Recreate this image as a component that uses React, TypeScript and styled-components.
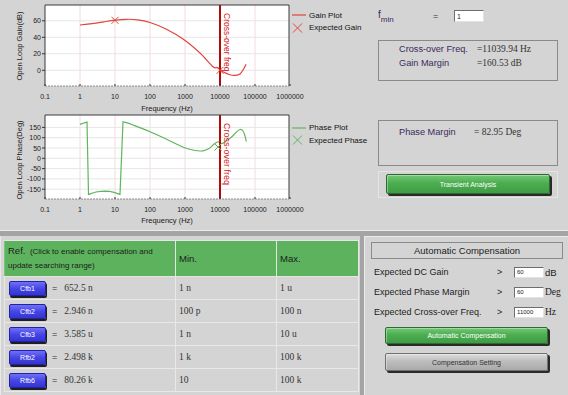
import React from 'react';
import styled, { createGlobalStyle } from 'styled-components';

const GlobalStyle = createGlobalStyle`
  html, body { margin: 0; padding: 0; background: #d4d4d4; }
  body { font-family: "Liberation Sans", Arial, sans-serif; }
`;

type Pt = [number, number];

// catmull-rom -> cubic bezier, used to draw the response curves
const smooth = (pts: Pt[], move = true) => {
  let d = move ? `M${pts[0][0]},${pts[0][1]}` : `L${pts[0][0]},${pts[0][1]}`;
  for (let i = 0; i < pts.length - 1; i++) {
    const p0 = pts[i - 1] || pts[i];
    const p1 = pts[i];
    const p2 = pts[i + 1];
    const p3 = pts[i + 2] || p2;
    const c1x = p1[0] + (p2[0] - p0[0]) / 6;
    const c1y = p1[1] + (p2[1] - p0[1]) / 6;
    const c2x = p2[0] - (p3[0] - p1[0]) / 6;
    const c2y = p2[1] - (p3[1] - p1[1]) / 6;
    d += ` C${c1x.toFixed(1)},${c1y.toFixed(1)} ${c2x.toFixed(1)},${c2y.toFixed(1)} ${p2[0]},${p2[1]}`;
  }
  return d;
};

const Page = styled.div`
  width: 568px;
  height: 395px;
  overflow: hidden;
  background: #d4d4d4;
  display: flex;
  flex-direction: column;
`;

const TopArea = styled.div`
  display: grid;
  grid-template-columns: 290px 88px 190px;
  grid-template-rows: 110px 120px;
`;

const ChartSvg = styled.svg`
  display: block;
  overflow: visible;
`;

const Legend = styled.div<{ $top: number }>`
  display: flex;
  flex-direction: column;
  padding: ${(p) => p.$top}px 0 0 2px;
`;

const LegendItem = styled.div`
  display: flex;
  align-items: center;
  height: 12.4px;
  gap: 3px;
  font-size: 8px;
  color: #111;
  white-space: nowrap;
`;

const InfoCol = styled.div<{ $top: number }>`
  display: flex;
  flex-direction: column;
  padding-top: ${(p) => p.$top}px;
`;

const FminRow = styled.div`
  display: flex;
  align-items: center;
  height: 12px;
  color: #3b2a5c;
`;

const FLabel = styled.span`
  width: 55px;
  font-size: 10px;
  sub {
    font-size: 8px;
    vertical-align: -4px;
  }
`;

const EqSign = styled.span`
  width: 21px;
  font-size: 9px;
`;

const TextBox = styled.input<{ $w: number; $h: number; $fs: number }>`
  box-sizing: border-box;
  width: ${(p) => p.$w}px;
  height: ${(p) => p.$h}px;
  border: 1px solid;
  border-color: #6e6e6e #e2e2e2 #e2e2e2 #6e6e6e;
  background: #fff;
  font-family: "Liberation Sans", Arial, sans-serif;
  font-size: ${(p) => p.$fs}px;
  padding: 0 2px;
  color: #222;
  outline: none;
`;

const ResultBox = styled.div<{ $mt: number; $h: number }>`
  box-sizing: border-box;
  margin-top: ${(p) => p.$mt}px;
  width: 180px;
  height: ${(p) => p.$h}px;
  border: 1px solid #8a8a8a;
  padding-top: 1px;
`;

const ResultRow = styled.div`
  display: flex;
  align-items: center;
  height: 13.7px;
  padding-left: 20px;
`;

const ResultLabel = styled.span<{ $w: number }>`
  width: ${(p) => p.$w}px;
  font-size: 9.2px;
  color: #3b2a5c;
`;

const ResultValue = styled.span`
  font-family: "Liberation Serif", "Times New Roman", serif;
  font-size: 9.5px;
  color: #333;
`;

const ButtonFrame = styled.div`
  box-sizing: border-box;
  margin-top: 5px;
  width: 180px;
  height: 27px;
  border: 1px solid #e4e4e4;
  padding: 2px 7px 0 7px;
`;

const ActionButton = styled.button<{ $tone: 'green' | 'gray'; $h: number }>`
  display: block;
  box-sizing: border-box;
  width: 100%;
  height: ${(p) => p.$h}px;
  padding: 0;
  border: 1px solid ${(p) => (p.$tone === 'green' ? '#2f6a32' : '#707070')};
  border-radius: 2px;
  background: ${(p) =>
    p.$tone === 'green'
      ? 'linear-gradient(#74c877, #4cae50 45%, #3f9c43)'
      : 'linear-gradient(#dcdcdc, #bdbdbd 45%, #aaaaaa)'};
  box-shadow: 2px 2px 0 #2a2a2a, inset 1px 1px 0 rgba(255, 255, 255, 0.35);
  color: ${(p) => (p.$tone === 'green' ? '#fff' : '#333')};
  font-family: "Liberation Sans", Arial, sans-serif;
  font-size: 7px;
`;

const Separator = styled.div`
  height: 5px;
  border-top: 1px solid #ececec;
  background: #a4a4a4;
`;

const BottomArea = styled.div`
  flex: 1;
  display: flex;
`;

const LeftPanel = styled.div`
  width: 360px;
  box-sizing: border-box;
  padding: 4px 0 0 3px;
  border-left: 1px solid #e8e8e8;
`;

const Divider = styled.div`
  width: 4px;
  background: #a4a4a4;
`;

const RightPanel = styled.div`
  flex: 1;
  box-sizing: border-box;
  border-left: 1px solid #ececec;
  border-top: 1px solid #ececec;
  padding: 5px 4px 0 6px;
  display: flex;
  flex-direction: column;
`;

const Table = styled.table`
  border-collapse: collapse;
  table-layout: fixed;
  width: 355px;
`;

const Th = styled.th<{ $w?: number }>`
  ${(p) => (p.$w ? `width: ${p.$w}px;` : '')}
  height: 35px;
  padding: 0 0 0 3px;
  background: #5db35d;
  border: 1px solid #e4e4e4;
  border-left-color: #7cc47c;
  text-align: left;
  vertical-align: middle;
  font-weight: normal;
  font-size: 9.5px;
  color: #1c1c1c;
`;

const RefHead = styled.div`
  line-height: 14px;
  font-size: 8px;
  b {
    font-weight: normal;
    font-size: 9.5px;
  }
`;

const Td = styled.td`
  height: 22px;
  padding: 0 0 0 3px;
  border: 1px solid #e8e8e8;
  font-family: "Liberation Serif", "Times New Roman", serif;
  font-size: 9.5px;
  color: #333;
  vertical-align: middle;
`;

const RefCell = styled.div`
  display: flex;
  align-items: center;
`;

const RefButton = styled.button`
  box-sizing: border-box;
  width: 37px;
  height: 15px;
  margin-left: 1px;
  padding: 0;
  border: 1px solid #2222a8;
  border-radius: 2px;
  background: linear-gradient(#7070f6, #4646e6 50%, #3434d2);
  box-shadow: 1px 2px 0 #1e1e1e;
  color: #fff;
  font-family: "Liberation Sans", Arial, sans-serif;
  font-size: 7px;
`;

const RefEq = styled.span`
  margin: 0 7px 0 6px;
  font-family: "Liberation Sans", Arial, sans-serif;
  font-size: 9px;
`;

const SectionTitle = styled.div`
  box-sizing: border-box;
  width: 192px;
  height: 17px;
  border: 1px solid #8a8a8a;
  display: flex;
  align-items: center;
  justify-content: center;
  font-size: 9.5px;
  color: #222;
`;

const SettingRows = styled.div`
  margin-top: 3px;
  display: flex;
  flex-direction: column;
`;

const SettingRow = styled.div`
  display: grid;
  grid-template-columns: 123px 17px 31px 1fr;
  align-items: center;
  height: 20px;
  padding-left: 3px;
  font-size: 9px;
  color: #1c1c1c;
`;

const Unit = styled.span<{ $serif?: boolean }>`
  font-family: ${(p) =>
    p.$serif ? '"Liberation Serif", "Times New Roman", serif' : '"Liberation Sans", Arial, sans-serif'};
  font-size: 9.5px;
`;

const ButtonStack = styled.div`
  margin: 5px 0 0 14px;
  width: 163px;
  display: flex;
  flex-direction: column;
  gap: 9px;
`;

/* ---------- chart ---------- */

const DECADES = ['0.1', '1', '10', '100', '1000', '10000', '100000', '1000000'];
const X0 = 45;
const X1 = 289;

interface ChartProps {
  height: number;
  y0: number;
  y1: number;
  yTicks: number[];
  yOf: (v: number) => number;
  yLabel: string;
  yLabelMid: number;
  labelBase: number;
  titleBase: number;
  gridColor: string;
  children?: React.ReactNode;
}

const Chart: React.FC<ChartProps> = ({
  height,
  y0,
  y1,
  yTicks,
  yOf,
  yLabel,
  yLabelMid,
  labelBase,
  titleBase,
  gridColor,
  children,
}) => (
  <ChartSvg width={290} height={height} fontFamily='"Liberation Sans", Arial, sans-serif'>
    <rect x={X0} y={y0} width={X1 - X0} height={y1 - y0} fill="#fff" />
    {DECADES.slice(1, 7).map((_, i) => (
      <line key={i} x1={X0 + 35 * (i + 1)} x2={X0 + 35 * (i + 1)} y1={y0} y2={y1} stroke={gridColor} strokeWidth={1} />
    ))}
    {yTicks.map((t) => (
      <line key={t} x1={X0} x2={X1} y1={yOf(t)} y2={yOf(t)} stroke="#e6e6e6" strokeWidth={1} />
    ))}
    {children}
    <line x1={X0} x2={X0} y1={y0} y2={y1} stroke="#3a3a3a" />
    <line x1={X0} x2={X1} y1={y0} y2={y0} stroke="#3a3a3a" />
    <line x1={X1} x2={X1} y1={y0} y2={y1} stroke="#3a3a3a" />
    <line x1={X0} x2={X1} y1={y1} y2={y1} stroke="#8a8a8a" strokeDasharray="2 1" />
    {yTicks.map((t) => (
      <g key={t}>
        <line x1={X0 - 3} x2={X0} y1={yOf(t)} y2={yOf(t)} stroke="#333" />
        <text x={X0 - 4} y={yOf(t) + 2.5} fontSize={7} textAnchor="end" fill="#1a1a1a">
          {t}
        </text>
      </g>
    ))}
    {DECADES.map((d, i) => (
      <g key={d}>
        <line x1={X0 + 35 * i} x2={X0 + 35 * i} y1={y1 - 2} y2={y1} stroke="#333" />
        <text x={X0 + 35 * i} y={labelBase} fontSize={7} textAnchor="middle" fill="#1a1a1a">
          {d}
        </text>
      </g>
    ))}
    <text x={167} y={titleBase} fontSize={7.5} textAnchor="middle" fill="#1a1a1a">
      Frequency (Hz)
    </text>
    <text transform={`translate(22,${yLabelMid}) rotate(-90)`} fontSize={7.5} textAnchor="middle" fill="#1a1a1a">
      {yLabel}
    </text>
  </ChartSvg>
);

const Cross: React.FC<{ x: number; y: number; color: string; r?: number }> = ({ x, y, color, r = 3.5 }) => (
  <path d={`M${x - r},${y - r} L${x + r},${y + r} M${x + r},${y - r} L${x - r},${y + r}`} stroke={color} strokeWidth={1} />
);

const CrossOver: React.FC<{ y0: number; y1: number; size: number }> = ({ y0, y1, size }) => (
  <>
    <line x1={220} x2={220} y1={y0} y2={y1} stroke="#b00a0a" strokeWidth={2} />
    <text transform={`translate(224,${y0 + 8}) rotate(90)`} fontSize={size} fill="#d42020">
      Cross-over freq
    </text>
  </>
);

const RED = '#e0443e';
const GREEN = '#5fb45f';

const gainPts: Pt[] = [
  [80, 25], [92, 23.6], [104, 21.8], [115, 20.2], [126, 19.3], [138, 19.8], [150, 22.5],
  [166, 29], [183, 39], [200, 53], [213, 66.7], [218, 67.7], [223, 71.7], [230, 74.7],
  [235, 75.3], [240, 74], [244, 68.3], [246, 64.3],
];

const phasePath =
  smooth([[80, 14.3], [84, 13], [87, 12]]) +
  ' ' +
  smooth([[88.5, 84.5], [96, 82], [106, 81.2], [114, 82.3], [120, 84.5]], false) +
  ' ' +
  smooth(
    [
      [123, 11.7], [133, 15], [150, 21.7], [166.7, 29.3], [183.3, 37.3], [195, 40.5], [203, 40.8],
      [209, 38.5], [213.5, 34.5], [217.5, 32], [220, 32.5], [222, 33.5], [226, 31], [231, 27.5],
      [236, 22.5], [240, 19.5], [243, 21], [245, 26], [246.3, 31.5],
    ],
    false,
  );

const gainY = (d: number) => 70.3 - 0.825 * d;
const phaseY = (d: number) => 48.3 - 0.206 * d;

const LegendLine: React.FC<{ color: string }> = ({ color }) => (
  <svg width={14} height={8}>
    <line x1={0} x2={14} y1={4} y2={4} stroke={color} strokeWidth={1.2} />
  </svg>
);

const LegendCross: React.FC<{ color: string }> = ({ color }) => (
  <svg width={14} height={10}>
    <Cross x={5.5} y={5} color={color} r={4.5} />
  </svg>
);

const compRows = [
  { ref: 'Cfb1', val: '652.5 n', min: '1 n', max: '1 u' },
  { ref: 'Cfb2', val: '2.946 n', min: '100 p', max: '100 n' },
  { ref: 'Cfb3', val: '3.585 u', min: '1 n', max: '10 u' },
  { ref: 'Rfb2', val: '2.498 k', min: '1 k', max: '100 k' },
  { ref: 'Rfb6', val: '80.26 k', min: '10', max: '100 k' },
];

const settings = [
  { label: 'Expected DC Gain', value: '60', unit: 'dB', serif: false },
  { label: 'Expected Phase Margin', value: '60', unit: 'Deg', serif: true },
  { label: 'Expected Cross-over Freq.', value: '11000', unit: 'Hz', serif: true },
];

const App: React.FC = () => (
  <>
    <GlobalStyle />
    <Page>
      <TopArea>
        <Chart
          height={110}
          y0={5}
          y1={86}
          yTicks={[60, 40, 20, 0]}
          yOf={gainY}
          yLabel="Open Loop Gain(dB)"
          yLabelMid={46}
          labelBase={98.5}
          titleBase={110.5}
          gridColor="#f3dada"
        >
          <path d={smooth(gainPts)} fill="none" stroke={RED} strokeWidth={1.2} />
          <Cross x={115} y={20.3} color={RED} />
          <CrossOver y0={5} y1={86} size={8.5} />
          <Cross x={220} y={70.3} color={RED} />
        </Chart>
        <Legend $top={9}>
          <LegendItem>
            <LegendLine color={RED} />
            Gain Plot
          </LegendItem>
          <LegendItem>
            <LegendCross color={RED} />
            Expected Gain
          </LegendItem>
        </Legend>
        <InfoCol $top={10}>
          <FminRow>
            <FLabel>
              f<sub>min</sub>
            </FLabel>
            <EqSign>=</EqSign>
            <TextBox $w={30} $h={12} $fs={7} defaultValue="1" />
          </FminRow>
          <ResultBox $mt={18} $h={41}>
            <ResultRow>
              <ResultLabel $w={78}>Cross-over Freq.</ResultLabel>
              <ResultValue>=11039.94 Hz</ResultValue>
            </ResultRow>
            <ResultRow>
              <ResultLabel $w={78}>Gain Margin</ResultLabel>
              <ResultValue>=160.53 dB</ResultValue>
            </ResultRow>
          </ResultBox>
        </InfoCol>

        <Chart
          height={120}
          y0={5}
          y1={89}
          yTicks={[150, 100, 50, 0, -50, -100, -150]}
          yOf={phaseY}
          yLabel="Open Loop Phase(Deg)"
          yLabelMid={50}
          labelBase={101.5}
          titleBase={112.5}
          gridColor="#eedede"
        >
          <path d={phasePath} fill="none" stroke={GREEN} strokeWidth={1.2} />
          <CrossOver y0={5} y1={89} size={9} />
          <Cross x={218} y={37} color={GREEN} />
        </Chart>
        <Legend $top={11.5}>
          <LegendItem>
            <LegendLine color={GREEN} />
            Phase Plot
          </LegendItem>
          <LegendItem>
            <LegendCross color={GREEN} />
            Expected Phase
          </LegendItem>
        </Legend>
        <InfoCol $top={0}>
          <ResultBox $mt={10} $h={46}>
            <ResultRow style={{ marginTop: 3 }}>
              <ResultLabel $w={75}>Phase Margin</ResultLabel>
              <ResultValue>= 82.95 Deg</ResultValue>
            </ResultRow>
          </ResultBox>
          <ButtonFrame>
            <ActionButton $tone="green" $h={20}>
              Transient Analysis
            </ActionButton>
          </ButtonFrame>
        </InfoCol>
      </TopArea>

      <Separator />

      <BottomArea>
        <LeftPanel>
          <Table>
            <thead>
              <tr>
                <Th $w={167}>
                  <RefHead>
                    <b>Ref.</b>&nbsp; (Click to enable compensation and
                    <br />
                    update searching range)
                  </RefHead>
                </Th>
                <Th $w={97}>Min.</Th>
                <Th>Max.</Th>
              </tr>
            </thead>
            <tbody>
              {compRows.map((r) => (
                <tr key={r.ref}>
                  <Td>
                    <RefCell>
                      <RefButton>{r.ref}</RefButton>
                      <RefEq>=</RefEq>
                      {r.val}
                    </RefCell>
                  </Td>
                  <Td>{r.min}</Td>
                  <Td>{r.max}</Td>
                </tr>
              ))}
            </tbody>
          </Table>
        </LeftPanel>
        <Divider />
        <RightPanel>
          <SectionTitle>Automatic Compensation</SectionTitle>
          <SettingRows>
            {settings.map((s) => (
              <SettingRow key={s.label}>
                <span>{s.label}</span>
                <span>&gt;</span>
                <TextBox $w={30} $h={11} $fs={6} defaultValue={s.value} />
                <Unit $serif={s.serif}>{s.unit}</Unit>
              </SettingRow>
            ))}
          </SettingRows>
          <ButtonStack>
            <ActionButton $tone="green" $h={17}>
              Automatic Compensation
            </ActionButton>
            <ActionButton $tone="gray" $h={18}>
              Compensation Setting
            </ActionButton>
          </ButtonStack>
        </RightPanel>
      </BottomArea>
    </Page>
  </>
);

export default App;
